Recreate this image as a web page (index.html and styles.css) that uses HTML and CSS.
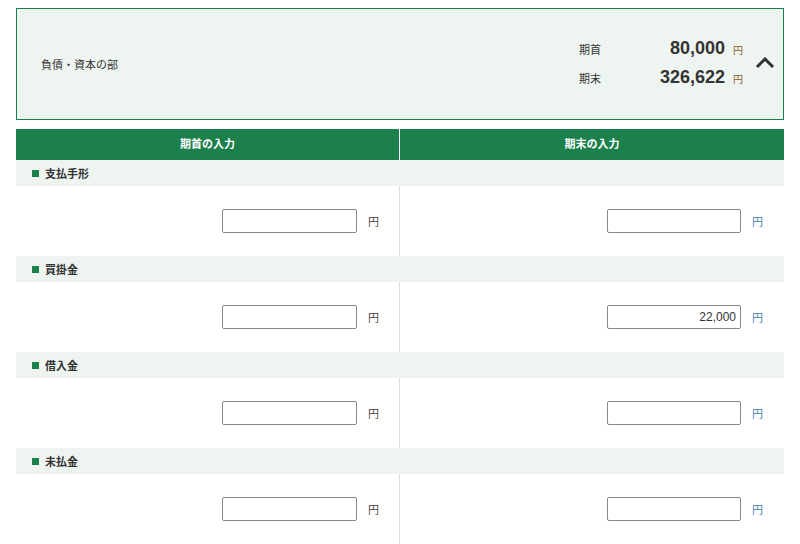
FILE: index.html
```html
<!DOCTYPE html>
<html lang="ja">
<head>
  <meta charset="UTF-8">
  <meta name="viewport" content="width=device-width, initial-scale=1.0">
  <title>負債・資本の部</title>
  <link rel="stylesheet" href="styles.css">
</head>
<body>
  <div class="summary">
    <div class="summary-title">負債・資本の部</div>
    <div class="summary-right">
      <div class="totals">
        <div class="total-row">
          <span class="total-label">期首</span>
          <span class="total-value">80,000</span>
          <span class="total-yen">円</span>
        </div>
        <div class="total-row">
          <span class="total-label">期末</span>
          <span class="total-value">326,622</span>
          <span class="total-yen">円</span>
        </div>
      </div>
      <svg class="chevron" width="20" height="12" viewBox="0 0 20 12">
        <path d="M2 10 L10 2 L18 10" fill="none" stroke="#333" stroke-width="3"/>
      </svg>
    </div>
  </div>

  <div class="table">
    <div class="head">
      <div class="head-cell">期首の入力</div>
      <div class="head-cell">期末の入力</div>
    </div>

    <div class="item-label"><span class="mark"></span>支払手形</div>
    <div class="item-row">
      <div class="cell"><input type="text"><span class="yen">円</span></div>
      <div class="cell end"><input type="text"><span class="yen">円</span></div>
    </div>

    <div class="item-label"><span class="mark"></span>買掛金</div>
    <div class="item-row">
      <div class="cell"><input type="text"><span class="yen">円</span></div>
      <div class="cell end"><input type="text" value="22,000"><span class="yen">円</span></div>
    </div>

    <div class="item-label"><span class="mark"></span>借入金</div>
    <div class="item-row">
      <div class="cell"><input type="text"><span class="yen">円</span></div>
      <div class="cell end"><input type="text"><span class="yen">円</span></div>
    </div>

    <div class="item-label"><span class="mark"></span>未払金</div>
    <div class="item-row">
      <div class="cell"><input type="text"><span class="yen">円</span></div>
      <div class="cell end"><input type="text"><span class="yen">円</span></div>
    </div>
  </div>
</body>
</html>
```

FILE: styles.css
```css
* {
  box-sizing: border-box;
  margin: 0;
  padding: 0;
}
body {
  margin: 8px 16px;
  font-family: "Liberation Sans", "Noto Sans CJK JP", sans-serif;
  color: #333;
  background-color: #fff;
}
.summary {
  display: flex;
  justify-content: space-between;
  align-items: center;
  height: 112px;
  padding: 0 8px 0 24px;
  border: 1px solid #1b804c;
  background-color: #eef4f0;
}
.summary-title {
  font-size: 11px;
}
.summary-right {
  display: flex;
  align-items: center;
  gap: 12px;
}
.totals {
  display: flex;
  flex-direction: column;
  gap: 5px;
}
.total-row {
  display: flex;
  align-items: baseline;
  height: 24px;
}
.total-label {
  width: 60px;
  font-size: 11px;
}
.total-value {
  width: 86px;
  text-align: right;
  font-size: 18px;
  font-weight: bold;
  color: #333;
}
.total-yen {
  margin-left: 8px;
  font-size: 10px;
  color: #8a5a2b;
}
.chevron {
  display: block;
  margin-bottom: 2px;
}
.table {
  margin-top: 9px;
}
.head {
  display: grid;
  grid-template-columns: 383px 1fr;
  gap: 1px;
  background-color: #fff;
}
.head-cell {
  height: 31px;
  line-height: 31px;
  text-align: center;
  background-color: #1b804c;
  color: #fff;
  font-size: 11px;
  font-weight: bold;
}
.item-label {
  display: flex;
  align-items: center;
  gap: 6px;
  height: 26px;
  padding-left: 16px;
  background-color: #eef4f0;
  font-size: 11px;
  font-weight: bold;
}
.mark {
  width: 7px;
  height: 7px;
  background-color: #1b804c;
}
.item-row {
  display: grid;
  grid-template-columns: 384px 1fr;
}
.cell {
  display: flex;
  justify-content: flex-end;
  align-items: center;
  gap: 11px;
  height: 70px;
  padding-right: 20px;
}
.cell:first-child {
  border-right: 1px solid #e0e0e0;
}
.cell input {
  width: 135px;
  height: 24px;
  padding: 0 4px;
  border: 1px solid #888;
  border-radius: 2px;
  text-align: right;
  font-family: "Liberation Sans", sans-serif;
  font-size: 12px;
  color: #333;
}
.cell.end input {
  width: 134px;
}
.cell.end {
  padding-right: 21px;
}
.yen {
  font-size: 11px;
  color: #444;
}
.cell.end .yen {
  color: #3f7fb0;
}
```
